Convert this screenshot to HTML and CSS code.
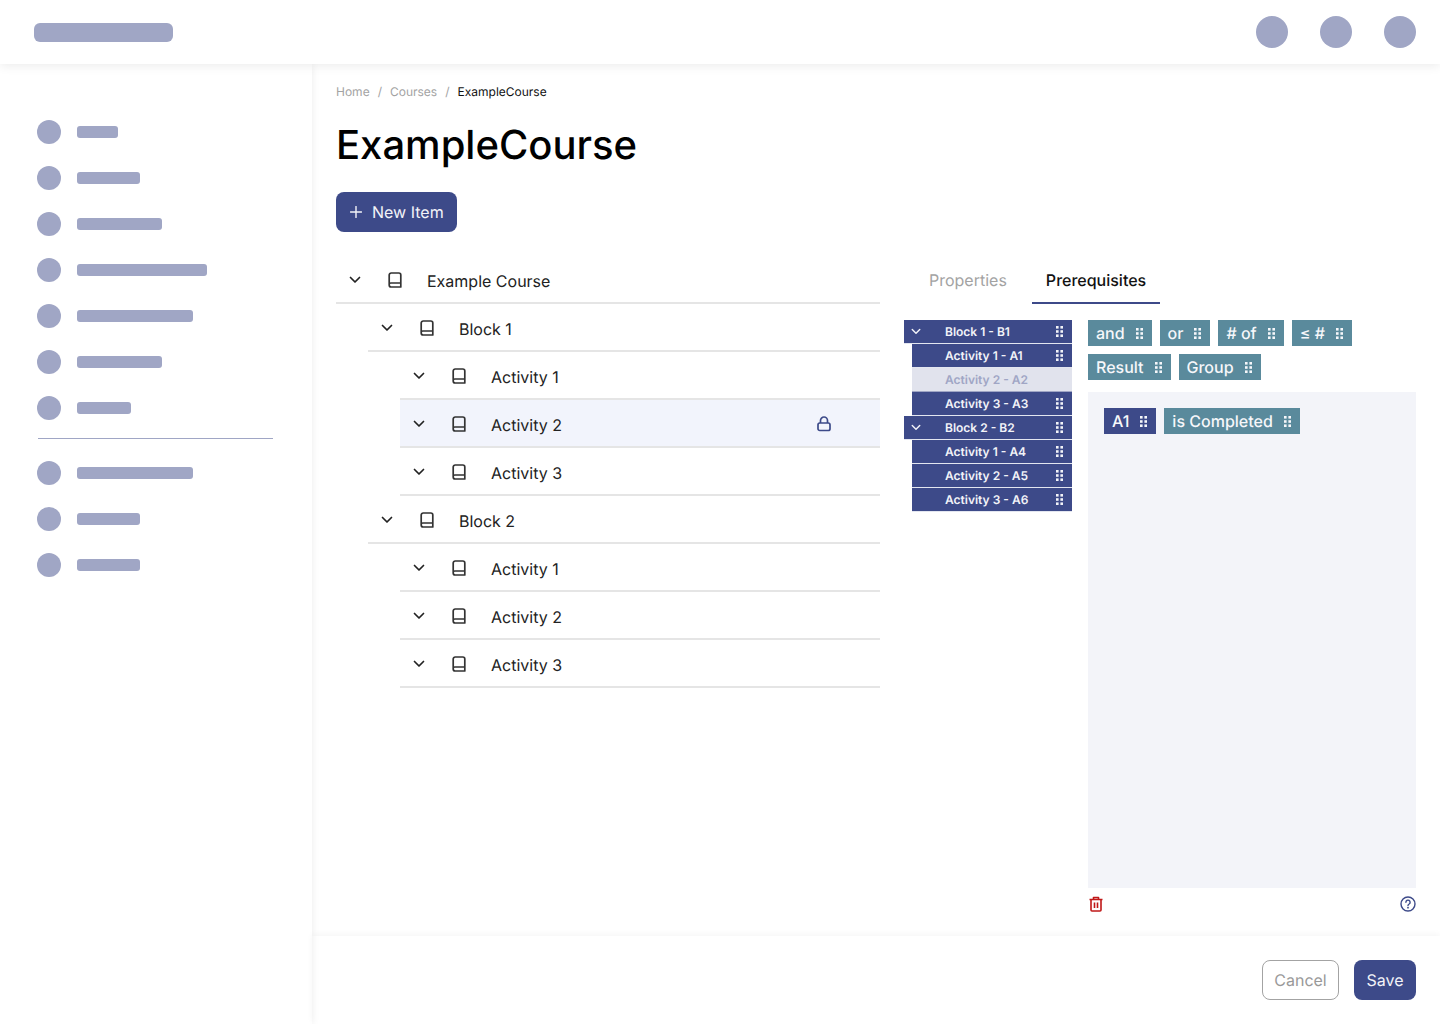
FILE: index.html
```html
<!DOCTYPE html>
<html lang="en">
<head>
    <meta charset="UTF-8">
    <meta name="viewport" content="width=device-width, initial-scale=1.0">
    <title>ExampleCourse</title>
    <link rel="stylesheet" href="styles.css">
</head>
<body>
    <svg class="icon-defs" width="0" height="0">
        <symbol id="chevron" viewBox="0 0 12 8">
            <path d="M1.5 1.5 6 6l4.5-4.5" fill="none" stroke="currentColor" stroke-width="1.7" stroke-linecap="round" stroke-linejoin="round"/>
        </symbol>
        <symbol id="book" viewBox="0 0 14 16">
            <path d="M3.2 1h7.6a2 2 0 0 1 2 2v12H3.2a2 2 0 0 1-2-2V3a2 2 0 0 1 2-2Z M1.2 12.5a1.5 1.5 0 0 1 1.5-1.5h10.1" fill="none" stroke="currentColor" stroke-width="1.7" stroke-linejoin="round"/>
        </symbol>
        <symbol id="grip" viewBox="0 0 7 11">
            <rect x="0" y="0" width="2.6" height="2.6"/><rect x="4.4" y="0" width="2.6" height="2.6"/>
            <rect x="0" y="4.2" width="2.6" height="2.6"/><rect x="4.4" y="4.2" width="2.6" height="2.6"/>
            <rect x="0" y="8.4" width="2.6" height="2.6"/><rect x="4.4" y="8.4" width="2.6" height="2.6"/>
        </symbol>
    </svg>

    <header class="topbar">
        <div class="logo-bar"></div>
        <div class="top-actions">
            <span class="dot-lg"></span>
            <span class="dot-lg"></span>
            <span class="dot-lg"></span>
        </div>
    </header>

    <div class="layout">
        <nav class="sidebar">
            <div class="nav-item"><span class="dot"></span><span class="nav-bar w41"></span></div>
            <div class="nav-item"><span class="dot"></span><span class="nav-bar w63"></span></div>
            <div class="nav-item"><span class="dot"></span><span class="nav-bar w85"></span></div>
            <div class="nav-item"><span class="dot"></span><span class="nav-bar w130"></span></div>
            <div class="nav-item"><span class="dot"></span><span class="nav-bar w116"></span></div>
            <div class="nav-item"><span class="dot"></span><span class="nav-bar w85"></span></div>
            <div class="nav-item"><span class="dot"></span><span class="nav-bar w54"></span></div>
            <hr class="nav-divider">
            <div class="nav-item"><span class="dot"></span><span class="nav-bar w116"></span></div>
            <div class="nav-item"><span class="dot"></span><span class="nav-bar w63"></span></div>
            <div class="nav-item"><span class="dot"></span><span class="nav-bar w63"></span></div>
        </nav>

        <div class="page">
            <main class="content">
                <div class="breadcrumb">
                    <span>Home</span><span class="sep">/</span><span>Courses</span><span class="sep">/</span><span class="current">ExampleCourse</span>
                </div>
                <h1>ExampleCourse</h1>
                <button class="btn btn-primary btn-new">
                    <svg width="12" height="12" viewBox="0 0 12 12"><path d="M6 .5v11M.5 6h11" stroke="currentColor" stroke-width="1.4" stroke-linecap="round"/></svg>
                    New Item
                </button>

                <div class="columns">
                    <!-- course tree -->
                    <section class="tree">
                        <div class="tree-row level-0">
                            <svg class="chev"><use href="#chevron"/></svg><svg class="book"><use href="#book"/></svg><span>Example Course</span>
                        </div>
                        <div class="tree-row level-1">
                            <svg class="chev"><use href="#chevron"/></svg><svg class="book"><use href="#book"/></svg><span>Block 1</span>
                        </div>
                        <div class="tree-row level-2">
                            <svg class="chev"><use href="#chevron"/></svg><svg class="book"><use href="#book"/></svg><span>Activity 1</span>
                        </div>
                        <div class="tree-row level-2 selected">
                            <svg class="chev"><use href="#chevron"/></svg><svg class="book"><use href="#book"/></svg><span>Activity 2</span>
                            <svg class="lock" width="14" height="16" viewBox="0 0 14 16"><path d="M3.5 7V4.5a3.5 3.5 0 0 1 7 0V7" fill="none" stroke="currentColor" stroke-width="1.7"/><rect x="1" y="7" width="12" height="7.5" rx="1.8" fill="none" stroke="currentColor" stroke-width="1.7"/></svg>
                        </div>
                        <div class="tree-row level-2">
                            <svg class="chev"><use href="#chevron"/></svg><svg class="book"><use href="#book"/></svg><span>Activity 3</span>
                        </div>
                        <div class="tree-row level-1">
                            <svg class="chev"><use href="#chevron"/></svg><svg class="book"><use href="#book"/></svg><span>Block 2</span>
                        </div>
                        <div class="tree-row level-2">
                            <svg class="chev"><use href="#chevron"/></svg><svg class="book"><use href="#book"/></svg><span>Activity 1</span>
                        </div>
                        <div class="tree-row level-2">
                            <svg class="chev"><use href="#chevron"/></svg><svg class="book"><use href="#book"/></svg><span>Activity 2</span>
                        </div>
                        <div class="tree-row level-2">
                            <svg class="chev"><use href="#chevron"/></svg><svg class="book"><use href="#book"/></svg><span>Activity 3</span>
                        </div>
                    </section>

                    <section class="panel">
                        <div class="tabs">
                            <div class="tab">Properties</div>
                            <div class="tab active">Prerequisites</div>
                        </div>
                        <div class="editor">
                            <div class="palette">
                                <div class="pal-row block"><svg class="pal-chev"><use href="#chevron"/></svg><span>Block 1 - B1</span><svg class="grip"><use href="#grip"/></svg></div>
                                <div class="pal-row"><span>Activity 1 - A1</span><svg class="grip"><use href="#grip"/></svg></div>
                                <div class="pal-row used"><span>Activity 2 - A2</span></div>
                                <div class="pal-row"><span>Activity 3 - A3</span><svg class="grip"><use href="#grip"/></svg></div>
                                <div class="pal-row block"><svg class="pal-chev"><use href="#chevron"/></svg><span>Block 2 - B2</span><svg class="grip"><use href="#grip"/></svg></div>
                                <div class="pal-row"><span>Activity 1 - A4</span><svg class="grip"><use href="#grip"/></svg></div>
                                <div class="pal-row"><span>Activity 2 - A5</span><svg class="grip"><use href="#grip"/></svg></div>
                                <div class="pal-row"><span>Activity 3 - A6</span><svg class="grip"><use href="#grip"/></svg></div>
                            </div>
                            <div class="rules">
                                <div class="chips">
                                    <div class="chip">and<svg class="grip"><use href="#grip"/></svg></div>
                                    <div class="chip">or<svg class="grip"><use href="#grip"/></svg></div>
                                    <div class="chip"># of<svg class="grip"><use href="#grip"/></svg></div>
                                    <div class="chip">≤ #<svg class="grip"><use href="#grip"/></svg></div>
                                    <div class="chip">Result<svg class="grip"><use href="#grip"/></svg></div>
                                    <div class="chip">Group<svg class="grip"><use href="#grip"/></svg></div>
                                </div>
                                <div class="canvas">
                                    <div class="chip dark">A1<svg class="grip"><use href="#grip"/></svg></div>
                                    <div class="chip">is Completed<svg class="grip"><use href="#grip"/></svg></div>
                                </div>
                                <div class="canvas-tools">
                                    <svg class="trash" width="16" height="16" viewBox="0 0 16 16"><path d="M1.5 3.5h13M5.5 3.5V1.5h5v2M3 3.5V14a1 1 0 0 0 1 1h8a1 1 0 0 0 1-1V3.5" fill="none" stroke="currentColor" stroke-width="1.6" stroke-linejoin="round"/><path d="M6.5 6.5v5.5M9.5 6.5v5.5" stroke="currentColor" stroke-width="1.6"/></svg>
                                    <svg class="help" width="16" height="16" viewBox="0 0 16 16"><circle cx="8" cy="8" r="7" fill="none" stroke="currentColor" stroke-width="1.4"/><path d="M5.9 6.2a2.1 2.1 0 1 1 3.2 1.8C8.4 8.4 8 8.8 8 9.6" fill="none" stroke="currentColor" stroke-width="1.4" stroke-linecap="round"/><circle cx="8" cy="11.7" r=".9" fill="currentColor"/></svg>
                                </div>
                            </div>
                        </div>
                    </section>
                </div>
            </main>

            <footer class="footer">
                <button class="btn btn-cancel">Cancel</button>
                <button class="btn btn-primary btn-save">Save</button>
            </footer>
        </div>
    </div>
</body>
</html>
```

FILE: styles.css
```css
* {
    box-sizing: border-box;
}
body {
    margin: 0;
    height: 1024px;
    overflow: hidden;
    font-family: Inter, "Noto Sans", sans-serif;
    text-rendering: geometricPrecision;
    background-color: #fff;
    color: #000;
}
.icon-defs {
    position: absolute;
}

/* top bar */
.topbar {
    position: relative;
    z-index: 2;
    height: 64px;
    display: flex;
    align-items: center;
    justify-content: space-between;
    padding: 0 24px 0 34px;
    background: #fff;
    box-shadow: 0 2px 10px rgba(0, 0, 0, 0.08);
}
.logo-bar {
    width: 139px;
    height: 19px;
    border-radius: 6px;
    background-color: #a0a6c5;
}
.top-actions {
    display: flex;
    gap: 32px;
}
.dot-lg {
    width: 32px;
    height: 32px;
    border-radius: 50%;
    background-color: #a0a6c5;
}

/* sidebar */
.layout {
    display: flex;
    height: 960px;
}
.sidebar {
    position: relative;
    z-index: 1;
    width: 312px;
    flex-shrink: 0;
    padding: 45px 39px 0 37px;
    box-shadow: 0 0 8px rgba(0, 0, 0, 0.08);
}
.nav-item {
    height: 46px;
    display: flex;
    align-items: center;
    gap: 16px;
}
.dot {
    width: 24px;
    height: 24px;
    border-radius: 50%;
    background-color: #a0a6c5;
}
.nav-bar {
    height: 12px;
    border-radius: 3px;
    background-color: #a0a6c5;
}
.w41 { width: 41px; }
.w54 { width: 54px; }
.w63 { width: 63px; }
.w85 { width: 85px; }
.w116 { width: 116px; }
.w130 { width: 130px; }
.nav-divider {
    margin: 7px 0 11px 1px;
    border: none;
    border-top: 1px solid #a0a6c5;
}

/* main */
.page {
    flex: 1;
    display: flex;
    flex-direction: column;
    min-width: 0;
}
.content {
    flex: 1;
    padding: 19px 24px 0;
}
.breadcrumb {
    display: flex;
    height: 16px;
    align-items: center;
    font-size: 12px;
    color: #a3a3a3;
}
.breadcrumb .sep {
    margin: 0 8px;
}
.breadcrumb .current {
    color: #111;
}
h1 {
    margin: 22px 0 23px;
    font-size: 40px;
    line-height: 48px;
    font-weight: 500;
}
.btn {
    height: 40px;
    padding: 0 12px;
    border: none;
    border-radius: 8px;
    font-family: inherit;
    font-size: 16px;
    text-rendering: inherit;
    cursor: pointer;
}
.btn-primary {
    background-color: #3d4a89;
    color: #f2f3f8;
}
.btn-new {
    display: flex;
    align-items: center;
    gap: 10px;
    padding: 0 13px 0 14px;
}
.btn-cancel {
    width: 77px;
    padding: 0;
    background: #fff;
    border: 1px solid #a3a3a3;
    color: #999;
}
.btn-save {
    width: 62px;
    padding: 0;
}

.columns {
    display: flex;
    margin-top: 24px;
}

/* tree */
.tree {
    width: 544px;
    flex-shrink: 0;
}
.tree-row {
    height: 48px;
    display: flex;
    align-items: center;
    border-bottom: 2px solid #e5e5e5;
    font-size: 16px;
    color: #222;
}
.tree-row span {
    padding-top: 4px;
}
.level-1 {
    margin-left: 32px;
}
.level-2 {
    margin-left: 64px;
}
.tree-row.selected {
    background-color: #f2f4fc;
}
.chev {
    width: 12px;
    height: 8px;
    margin: 2px 27px 0 13px;
    color: #222;
}
.book {
    width: 14px;
    height: 16px;
    margin: 2px 25px 0 0;
    color: #333;
}
.lock {
    margin: 2px 49px 0 auto;
    color: #3d4a89;
}

/* right panel */
.panel {
    margin-left: 24px;
    width: 512px;
}
.tabs {
    display: flex;
    gap: 11px;
    height: 48px;
    padding-left: 11px;
}
.tab {
    padding: 0 14px;
    line-height: 48px;
    font-size: 16px;
    color: #a3a3a3;
}
.tab.active {
    color: #111;
    font-weight: 500;
    border-bottom: 2px solid #3d4a89;
}
.editor {
    display: flex;
    margin-top: 16px;
}
.palette {
    width: 168px;
    flex-shrink: 0;
}
.pal-row {
    height: 24px;
    margin-left: 8px;
    padding: 0 9px 0 33px;
    display: flex;
    align-items: center;
    justify-content: space-between;
    background-color: #3d4a89;
    border-bottom: 1px solid #e3e6f0;
    font-size: 12px;
    font-weight: 600;
    color: #f2f3f8;
}
.pal-row.block {
    margin-left: 0;
    padding-left: 7px;
}
.pal-row.block span {
    margin-right: auto;
}
.pal-chev {
    width: 10px;
    height: 7px;
    margin-right: 24px;
    color: #f2f3f8;
}
.pal-row.used {
    background-color: #e1e3ed;
    border-bottom-color: #a0a6c5;
    color: #a0a6c5;
}
.grip {
    width: 7px;
    height: 11px;
    fill: currentColor;
}
.rules {
    margin-left: 16px;
    width: 328px;
}
.chips {
    display: flex;
    flex-wrap: wrap;
    gap: 8px;
}
.chip {
    height: 26px;
    padding: 0 9px 0 8px;
    display: flex;
    align-items: center;
    gap: 11px;
    background-color: #5a8a9c;
    font-size: 16px;
    font-weight: 500;
    color: #f6f7fa;
}
.chip.dark {
    background-color: #3d4a89;
}
.canvas {
    height: 496px;
    margin-top: 12px;
    padding: 16px;
    display: flex;
    align-items: flex-start;
    gap: 8px;
    background-color: #f3f4f9;
}
.canvas-tools {
    display: flex;
    justify-content: space-between;
    margin-top: 8px;
}
.trash {
    color: #c01818;
}
.help {
    color: #3d4a89;
}

/* footer */
.footer {
    height: 88px;
    padding: 24px;
    display: flex;
    justify-content: flex-end;
    gap: 15px;
    box-shadow: 0 -2px 6px rgba(0, 0, 0, 0.04);
}
```
